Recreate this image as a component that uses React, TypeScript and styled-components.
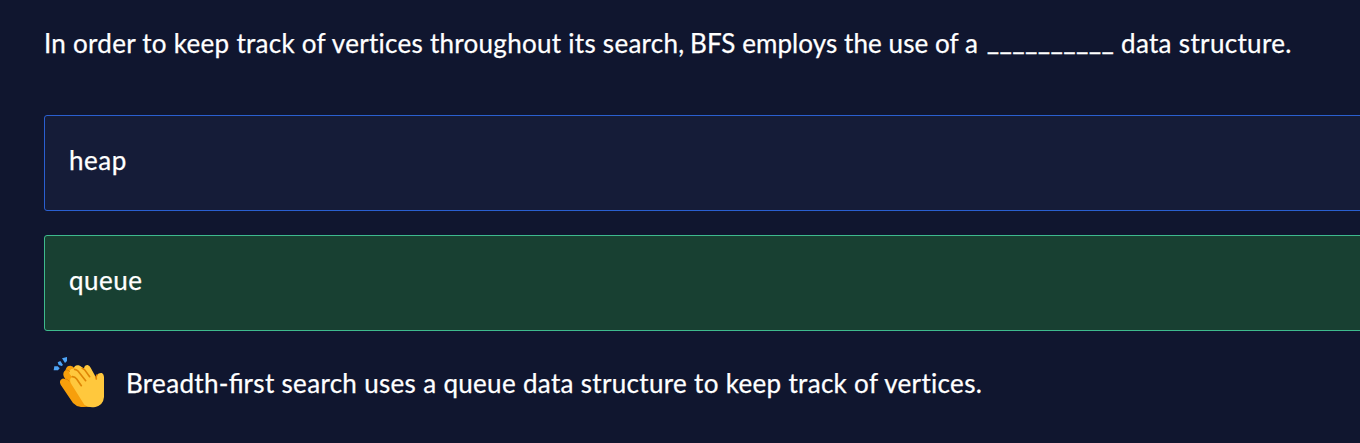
import React from 'react';
import styled, { createGlobalStyle } from 'styled-components';

const GlobalStyle = createGlobalStyle`
  body { margin: 0; background: #10162f; overflow: hidden; }
`;

const Quiz = styled.main`
  box-sizing: border-box;
  height: 443px;
  padding: 24px 0 0 44px;
  overflow: hidden;
  color: #fff;
  background: #10162f;
  font: 400 26px/39px Lato, "Open Sans", sans-serif;
  -webkit-text-stroke: 0.25px #fff;
  white-space: nowrap;
`;

const Question = styled.p`
  display: flex;
  height: 39px;
  margin: 0 0 52px;
`;

const Run = styled.span<{ $width: number; $tracking: number }>`
  flex: none;
  width: ${(p) => p.$width}px;
  letter-spacing: ${(p) => p.$tracking}px;
`;

const Blank = styled(Run)`
  margin-top: -3px;
  -webkit-text-stroke-width: 0.5px;
`;

const Options = styled.div`
  display: flex;
  flex-direction: column;
  gap: 24px;
  width: 1340px;
`;

const Option = styled.button<{ $correct?: boolean }>`
  box-sizing: border-box;
  height: 96px;
  padding: 0 24px 6px;
  border: 1px solid ${(p) => (p.$correct ? '#3eba8d' : '#2a5fd0')};
  border-radius: 3px;
  background: ${(p) => (p.$correct ? '#184032' : '#151c38')};
  color: inherit;
  font: inherit;
  letter-spacing: 0.5px;
  text-align: left;
`;

const Feedback = styled.div`
  display: flex;
  align-items: flex-start;
  padding: 23px 0 0 8px;
`;

const Explanation = styled.p`
  margin: 10px 0 0 18px;
  letter-spacing: 0.32px;
`;

const Ligature = styled.span`
  letter-spacing: 0;
`;

const Clap = () => (
  <svg width="56" height="56" viewBox="36 27 168 168" aria-hidden="true">
    <g fill="#4da3f5">
      <path d="M66 40 L81 36 L81 48 L75 54Z" />
      <path d="M53 52 L61 48 L69 60 L65 63 L56 60Z" />
      <path d="M43 64 L53 64 L59 70 L54 76 L41 76Z" />
    </g>
    <path
      fill="#f79f0b"
      d="M77 75 Q79 62 91 62 Q99 63 103 70 L160 140 L152 184 Q140 187 123 186 Q108 184 99 174 L62 119 Q56 105 67 101 Q71 100 76 103 L71 94 Q67 82 77 75Z"
    />
    <path
      fill="#ffc83d"
      d="M100 72 Q104 58 116 61 Q121 62 126 67 L132 71 Q132 61 143 60 Q149 62 152 68 L170 101 L171 91 Q176 82 186 84 Q192 88 192 96 L192 156 Q190 180 166 186 Q145 189 133 179 L92 114 Q87 101 96 96 L89 87 Q85 77 94 72 Q97 71 100 72Z"
    />
    <g fill="none" stroke="#df8505" strokeWidth="5" strokeLinecap="round">
      <path d="M104 73 Q110 74 114 78 L137 107" />
      <path d="M97 95 Q105 95 110 102 L124 122" />
      <path d="M127 70 Q135 74 138 80 L149 95" />
      <path d="M171 90 Q167 94 169 102" />
    </g>
    <path d="M77 75 Q84 73 90 80 M75 102 Q82 101 88 109" fill="none" stroke="#df8505" strokeWidth="3" />
  </svg>
);

export default function App() {
  return (
    <Quiz>
      <GlobalStyle />
      <Question>
        <Run $width={646} $tracking={0.28}>In order to keep track of vertices throughout its search, </Run>
        <Run $width={297} $tracking={0.08}>BFS employs the use of a </Run>
        <Blank $width={134} $tracking={0.82}>__________</Blank>
        <Run $width={180} $tracking={0.33}>data structure.</Run>
      </Question>
      <Options>
        <Option>heap</Option>
        <Option $correct>queue</Option>
      </Options>
      <Feedback>
        <Clap />
        <Explanation>
          Breadth-<Ligature>fi</Ligature>rst search uses a queue data structure to keep track of vertices.
        </Explanation>
      </Feedback>
    </Quiz>
  );
}
